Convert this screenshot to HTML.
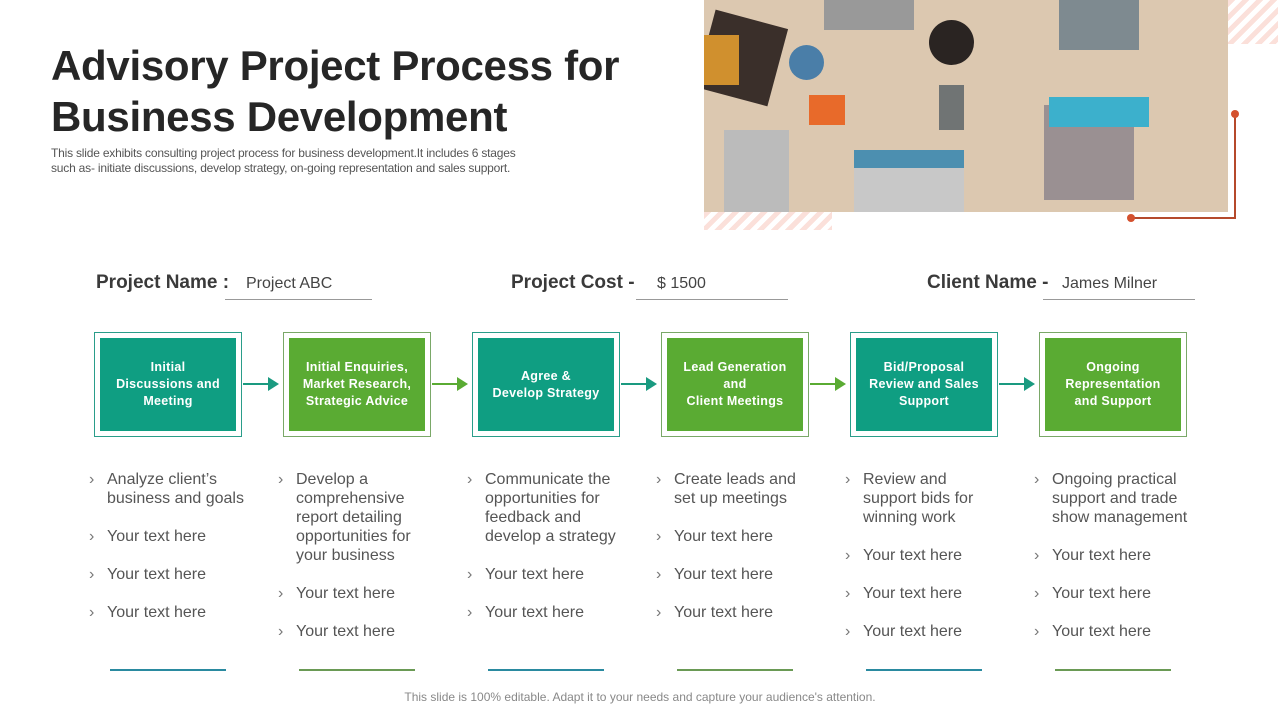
<!DOCTYPE html>
<html><head><meta charset="utf-8"><style>
*{margin:0;padding:0;box-sizing:border-box}
body{width:1280px;height:720px;background:#fff;position:relative;overflow:hidden;font-family:"Liberation Sans",sans-serif}
.a{position:absolute}
h1{position:absolute;left:51px;top:40px;font-size:42px;line-height:51px;font-weight:bold;color:#262626;letter-spacing:-0.3px}
.sub{left:51px;top:146px;font-size:12px;line-height:14.5px;color:#555;width:520px;letter-spacing:-0.2px}
.lbl{font-size:19px;font-weight:bold;color:#3a3a3a;top:272px}
.val{font-size:16px;color:#444;top:275px;border-bottom:1px solid #999;height:25px;padding-left:21px}
.ob{position:absolute;top:332px;width:148px;height:105px;border:1px solid}
.ib{position:absolute;left:5px;top:5px;width:136px;height:93px;color:#fff;font-weight:bold;font-size:12.5px;line-height:17px;display:flex;align-items:center;justify-content:center;text-align:center;letter-spacing:0.3px}
.t{border-color:#2a9d8a}.t .ib{background:#0f9e82}
.g{border-color:#7aa868}.g .ib{background:#5aab33}
.arr{position:absolute;top:383px;height:2px;width:26px}
.arr:after{content:"";position:absolute;right:-10px;top:-6px;border-left:11px solid;border-left-color:inherit;border-top:7px solid transparent;border-bottom:7px solid transparent}
ul{position:absolute;top:470px;list-style:none;font-size:16px;line-height:19px;color:#555;width:165px}
li{position:relative;padding-left:18px;margin-bottom:19px}
li:before{content:"›";position:absolute;left:0;top:0;color:#777}
.ln{position:absolute;top:669px;width:116px;height:2px}
</style></head><body>
<h1>Advisory Project Process for<br>Business Development</h1>
<div class="a sub">This slide exhibits consulting project process for business development.It includes 6 stages<br>such as- initiate discussions, develop strategy, on-going representation and sales support.</div>

<div class="a" style="left:1228px;top:0;width:50px;height:44px;background:repeating-linear-gradient(135deg,#fbe0da 0 5px,#fff 5px 10px)"></div>
<div class="a" style="left:704px;top:212px;width:128px;height:18px;background:repeating-linear-gradient(135deg,#fbe0da 0 5px,#fff 5px 10px)"></div>
<div class="a" style="left:704px;top:0;width:524px;height:212px;background:#dcc8b0;overflow:hidden">
<div class="a" style="left:120px;top:0;width:90px;height:30px;background:#999"></div>
<div class="a" style="left:355px;top:0;width:80px;height:50px;background:#7e8a90"></div>
<div class="a" style="left:0;top:18px;width:75px;height:80px;background:#3a2f2a;transform:rotate(15deg)"></div>
<div class="a" style="left:0;top:35px;width:35px;height:50px;background:#d0902e"></div>
<div class="a" style="left:85px;top:45px;width:35px;height:35px;border-radius:50%;background:#4a7ea8"></div>
<div class="a" style="left:225px;top:20px;width:45px;height:45px;border-radius:50%;background:#2a2422"></div>
<div class="a" style="left:105px;top:95px;width:36px;height:30px;background:#e86a2a"></div>
<div class="a" style="left:235px;top:85px;width:25px;height:45px;background:#707474"></div>
<div class="a" style="left:20px;top:130px;width:65px;height:82px;background:#bbb"></div>
<div class="a" style="left:150px;top:150px;width:110px;height:62px;background:#c8c8c8"></div>
<div class="a" style="left:150px;top:150px;width:110px;height:18px;background:#4c8fb0"></div>
<div class="a" style="left:340px;top:105px;width:90px;height:95px;background:#9a9092"></div>
<div class="a" style="left:345px;top:97px;width:100px;height:30px;background:#3cb0cc"></div>
</div>
<div class="a" style="left:1234px;top:114px;width:2px;height:104px;background:#b5492b"></div>
<div class="a" style="left:1131px;top:217px;width:105px;height:2px;background:#b5492b"></div>
<div class="a" style="left:1231px;top:110px;width:8px;height:8px;border-radius:50%;background:#d4512e"></div>
<div class="a" style="left:1127px;top:214px;width:8px;height:8px;border-radius:50%;background:#d4512e"></div>

<div class="a lbl" style="left:96px">Project Name :</div>
<div class="a val" style="left:225px;width:147px">Project ABC</div>
<div class="a lbl" style="left:511px">Project Cost -</div>
<div class="a val" style="left:636px;width:152px">$ 1500</div>
<div class="a lbl" style="left:927px">Client Name -</div>
<div class="a val" style="left:1043px;width:152px;padding-left:19px">James Milner</div>

<div class="ob t" style="left:94px"><div class="ib">Initial<br>Discussions and<br>Meeting</div></div>
<div class="ob g" style="left:283px"><div class="ib">Initial Enquiries,<br>Market Research,<br>Strategic Advice</div></div>
<div class="ob t" style="left:472px"><div class="ib">Agree &amp;<br>Develop Strategy</div></div>
<div class="ob g" style="left:661px"><div class="ib">Lead Generation<br>and<br>Client Meetings</div></div>
<div class="ob t" style="left:850px"><div class="ib">Bid/Proposal<br>Review and Sales<br>Support</div></div>
<div class="ob g" style="left:1039px"><div class="ib">Ongoing<br>Representation<br>and Support</div></div>

<div class="arr" style="left:243px;background:#1a9a80;border-color:#1a9a80"></div>
<div class="arr" style="left:432px;background:#5aab33;border-color:#5aab33"></div>
<div class="arr" style="left:621px;background:#1a9a80;border-color:#1a9a80"></div>
<div class="arr" style="left:810px;background:#5aab33;border-color:#5aab33"></div>
<div class="arr" style="left:999px;background:#1a9a80;border-color:#1a9a80"></div>

<ul style="left:89px"><li>Analyze client’s business and goals</li><li>Your text here</li><li>Your text here</li><li>Your text here</li></ul>
<ul style="left:278px;width:150px"><li>Develop a comprehensive report detailing opportunities for your business</li><li>Your text here</li><li>Your text here</li></ul>
<ul style="left:467px;width:160px"><li>Communicate the opportunities for feedback and develop a strategy</li><li>Your text here</li><li>Your text here</li></ul>
<ul style="left:656px;width:160px"><li>Create leads and set up meetings</li><li>Your text here</li><li>Your text here</li><li>Your text here</li></ul>
<ul style="left:845px;width:150px"><li>Review and support bids for winning work</li><li>Your text here</li><li>Your text here</li><li>Your text here</li></ul>
<ul style="left:1034px;width:170px"><li>Ongoing practical support and trade show management</li><li>Your text here</li><li>Your text here</li><li>Your text here</li></ul>

<div class="ln" style="left:110px;background:#2a8aa0"></div>
<div class="ln" style="left:299px;background:#6a9a55"></div>
<div class="ln" style="left:488px;background:#2a8aa0"></div>
<div class="ln" style="left:677px;background:#6a9a55"></div>
<div class="ln" style="left:866px;background:#2a8aa0"></div>
<div class="ln" style="left:1055px;background:#6a9a55"></div>

<div class="a" style="left:0;width:1280px;top:690px;text-align:center;font-size:12px;color:#888">This slide is 100% editable. Adapt it to your needs and capture your audience's attention.</div>
</body></html>
